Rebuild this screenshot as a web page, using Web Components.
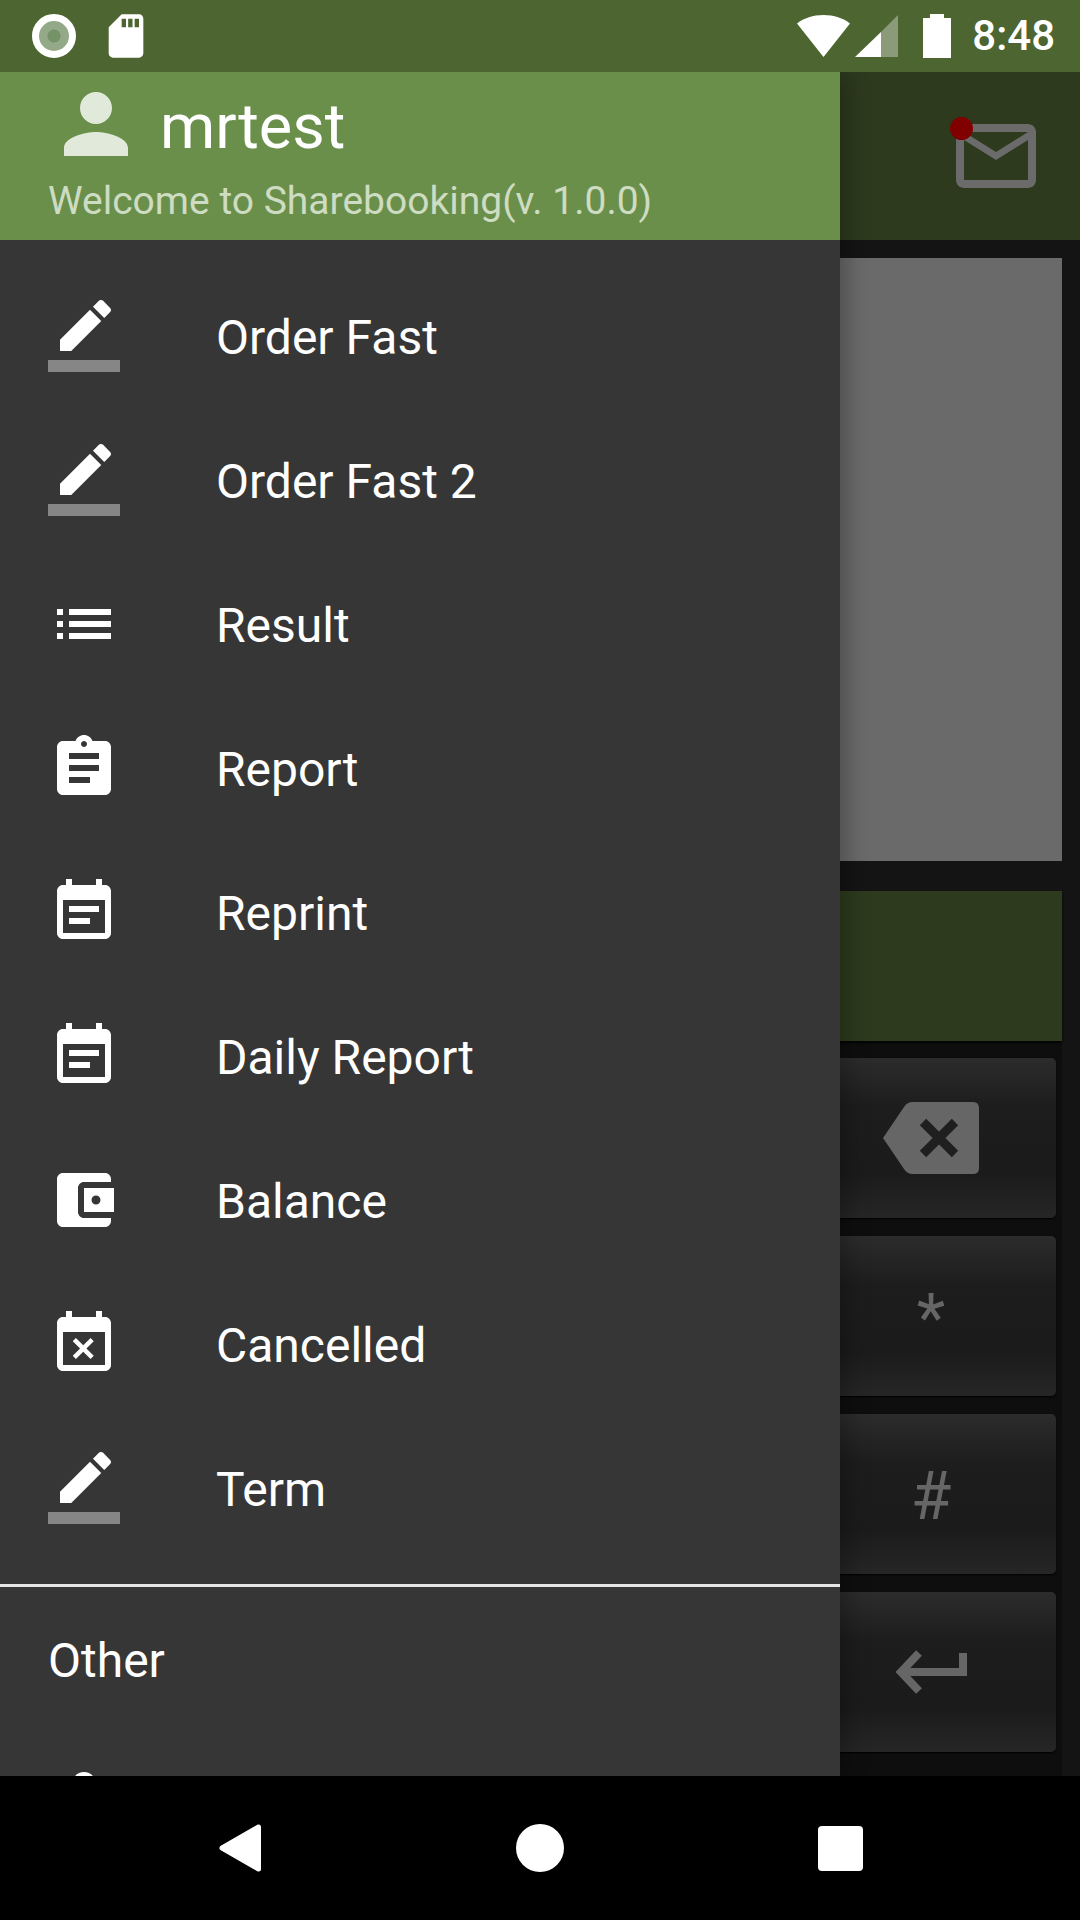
<!DOCTYPE html>
<html>
<head>
<meta charset="utf-8">
<title>Sharebooking</title>
<style>
  html, body { margin: 0; padding: 0; background: #000; }
  body { font-family: Roboto, "Liberation Sans", sans-serif; }
</style>
</head>
<body>
<phone-shell>
  <status-bar slot="status" time="8:48"></status-bar>
  <app-toolbar></app-toolbar>
  <order-panel>
    <dial-key kind="backspace"></dial-key>
    <dial-key>*</dial-key>
    <dial-key>#</dial-key>
    <dial-key kind="enter"></dial-key>
  </order-panel>
  <nav-drawer slot="drawer" user="mrtest" welcome="Welcome to Sharebooking(v. 1.0.0)">
    <drawer-item icon="border">Order Fast</drawer-item>
    <drawer-item icon="border">Order Fast 2</drawer-item>
    <drawer-item icon="list">Result</drawer-item>
    <drawer-item icon="assignment">Report</drawer-item>
    <drawer-item icon="note">Reprint</drawer-item>
    <drawer-item icon="note">Daily Report</drawer-item>
    <drawer-item icon="wallet">Balance</drawer-item>
    <drawer-item icon="busy">Cancelled</drawer-item>
    <drawer-item icon="border">Term</drawer-item>
    <drawer-section slot="other">Other</drawer-section>
    <drawer-item slot="other" icon="person"></drawer-item>
  </nav-drawer>
  <system-nav slot="nav"></system-nav>
</phone-shell>

<script>
const ICONS = {
  border: `<path d="M17.75 7L14 3.25l-10 10V17h3.75l10-10zm2.96-2.96c.39-.39.39-1.02 0-1.41L18.37.29c-.39-.39-1.02-.39-1.41 0L15 2.25 18.75 6l1.96-1.96z"/><path fill-opacity=".4" d="M0 20h24v4H0z"/>`,
  list: `<path d="M3 13h2v-2H3v2zm0 4h2v-2H3v2zm0-8h2V7H3v2zm4 4h14v-2H7v2zm0 4h14v-2H7v2zM7 7v2h14V7H7z"/>`,
  assignment: `<path d="M19 3h-4.18C14.4 1.84 13.3 1 12 1c-1.3 0-2.4.84-2.82 2H5c-1.1 0-2 .9-2 2v14c0 1.1.9 2 2 2h14c1.1 0 2-.9 2-2V5c0-1.1-.9-2-2-2zm-7 0c.55 0 1 .45 1 1s-.45 1-1 1-1-.45-1-1 .45-1 1-1zm2 14H7v-2h7v2zm3-4H7v-2h10v2zm0-4H7V7h10v2z"/>`,
  note: `<path d="M17 10H7v2h10v-2zm2-7h-1V1h-2v2H8V1H6v2H5c-1.11 0-1.99.9-1.99 2L3 19c0 1.1.89 2 2 2h14c1.1 0 2-.9 2-2V5c0-1.1-.9-2-2-2zm0 16H5V8h14v11zm-5-5H7v2h7v-2z"/>`,
  wallet: `<path d="M21 18v1c0 1.1-.9 2-2 2H5c-1.11 0-2-.9-2-2V5c0-1.1.89-2 2-2h14c1.1 0 2 .9 2 2v1h-9c-1.11 0-2 .9-2 2v8c0 1.1.89 2 2 2h9zm-9-2h10V8H12v8zm4-2.5c-.83 0-1.5-.67-1.5-1.5s.67-1.5 1.5-1.5 1.5.67 1.5 1.5-.67 1.5-1.5 1.5z"/>`,
  busy: `<path d="M9.31 17l2.44-2.44L14.19 17l1.06-1.06-2.44-2.44 2.44-2.44L14.19 10l-2.44 2.44L9.31 10l-1.06 1.06 2.44 2.44-2.44 2.44L9.31 17zM19 3h-1V1h-2v2H8V1H6v2H5c-1.11 0-1.99.9-1.99 2L3 19c0 1.1.89 2 2 2h14c1.1 0 2-.9 2-2V5c0-1.1-.9-2-2-2zm0 16H5V8h14v11z"/>`,
  person: `<path d="M12 12c2.21 0 4-1.79 4-4s-1.79-4-4-4-4 1.79-4 4 1.79 4 4 4zm0 2c-2.67 0-8 1.34-8 4v2h16v-2c0-2.66-5.33-4-8-4z"/>`,
  mail: `<path d="M20 4H4c-1.1 0-1.99.9-1.99 2L2 18c0 1.1.9 2 2 2h16c1.1 0 2-.9 2-2V6c0-1.1-.9-2-2-2zm0 14H4V8l8 5 8-5v10zm-8-7L4 6h16l-8 5z"/>`,
  sd: `<path d="M18 2h-8L4.02 8 4 20c0 1.1.9 2 2 2h12c1.1 0 2-.9 2-2V4c0-1.1-.9-2-2-2zm-6 6h-2V4h2v4zm3 0h-2V4h2v4zm3 0h-2V4h2v4z"/>`,
};

function svgIcon(name, size) {
  return `<svg width="${size}" height="${size}" viewBox="0 0 24 24" fill="currentColor">${ICONS[name]}</svg>`;
}

class PhoneShell extends HTMLElement {
  constructor() {
    super();
    this.attachShadow({ mode: "open" }).appendChild(shellTemplate.content.cloneNode(true));
  }
}

class StatusBar extends HTMLElement {
  constructor() {
    super();
    this.attachShadow({ mode: "open" }).appendChild(statusTemplate.content.cloneNode(true));
    this.shadowRoot.querySelector(".sd").innerHTML = svgIcon("sd", 52);
    this.shadowRoot.querySelector(".time").textContent = this.getAttribute("time");
  }
}

class AppToolbar extends HTMLElement {
  constructor() {
    super();
    this.attachShadow({ mode: "open" }).appendChild(toolbarTemplate.content.cloneNode(true));
    this.shadowRoot.querySelector(".mail").insertAdjacentHTML("afterbegin", svgIcon("mail", 96));
  }
}

class OrderPanel extends HTMLElement {
  constructor() {
    super();
    this.attachShadow({ mode: "open" }).appendChild(panelTemplate.content.cloneNode(true));
  }
}

class DialKey extends HTMLElement {
  constructor() {
    super();
    this.attachShadow({ mode: "open" }).appendChild(keyTemplate.content.cloneNode(true));
    const kind = this.getAttribute("kind");
    if (kind) this.shadowRoot.querySelector(".glyph").innerHTML = KEY_GLYPHS[kind];
  }
}

class NavDrawer extends HTMLElement {
  constructor() {
    super();
    this.attachShadow({ mode: "open" }).appendChild(drawerTemplate.content.cloneNode(true));
    this.shadowRoot.querySelector(".avatar").innerHTML = svgIcon("person", 96);
    this.shadowRoot.querySelector(".user").textContent = this.getAttribute("user");
    this.shadowRoot.querySelector(".welcome").textContent = this.getAttribute("welcome");
  }
}

class DrawerItem extends HTMLElement {
  constructor() {
    super();
    this.attachShadow({ mode: "open" }).appendChild(itemTemplate.content.cloneNode(true));
    this.shadowRoot.querySelector(".icon").innerHTML = svgIcon(this.getAttribute("icon"), 72);
  }
}

class DrawerSection extends HTMLElement {
  constructor() {
    super();
    this.attachShadow({ mode: "open" }).appendChild(sectionTemplate.content.cloneNode(true));
  }
}

class SystemNav extends HTMLElement {
  constructor() {
    super();
    this.attachShadow({ mode: "open" }).appendChild(navTemplate.content.cloneNode(true));
  }
}

const KEY_GLYPHS = {
  backspace: `<svg width="96" height="72" viewBox="0 0 96 72">
      <path fill="#666" d="M0 36L21 5Q24 0 30 0H90Q96 0 96 6V66Q96 72 90 72H30Q24 72 21 67z"/>
      <path stroke="#1f1f1f" stroke-width="9" fill="none" d="M40 20L72 52M72 20L40 52"/>
    </svg>`,
  enter: `<svg width="72" height="44" viewBox="0 0 72 44">
      <path stroke="#666" stroke-width="8" fill="none" d="M68 3V22H6"/>
      <path stroke="#666" stroke-width="8" fill="none" d="M24 3L6 22L24 41"/>
    </svg>`,
};

const shellTemplate = html`
  <div class="frame">
    <slot name="status"></slot>
    <div class="main">
      <slot></slot>
      <slot name="drawer"></slot>
    </div>
    <slot name="nav"></slot>
  </div>
  <style>
    :host {
      display: block;
      width: 1080px;
      height: 1920px;
      overflow: hidden;
    }

    .frame {
      display: flex;
      flex-direction: column;
      height: 100%;
    }

    .main {
      position: relative;
      flex: 1;
      display: flex;
      flex-direction: column;
      background: #141414;
      overflow: hidden;
    }
  </style>
`;

const statusTemplate = html`
  <div class="left">
    <span class="ring"></span>
    <span class="sd"></span>
  </div>
  <div class="right">
    <svg class="wifi" width="53" height="42" viewBox="0 0 53 42">
      <path fill="#fff" d="M26.5 42L0 8.5C7 3 16 0 26.5 0S46 3 53 8.5z"/>
    </svg>
    <svg class="signal" width="43" height="42" viewBox="0 0 43 42">
      <path fill="#fff" fill-opacity=".35" d="M43 0V42H26V17z"/>
      <path fill="#fff" d="M26 17V42H0z"/>
    </svg>
    <svg class="battery" width="28" height="44" viewBox="0 0 28 44">
      <path fill="#fff" d="M7 0H21V4H28V44H0V4H7z"/>
    </svg>
    <span class="time"></span>
  </div>
  <style>
    :host {
      display: flex;
      flex: none;
      align-items: center;
      justify-content: space-between;
      height: 72px;
      background: #4d6531;
      color: #fff;
      font-family: Roboto, "Liberation Sans", sans-serif;
    }

    .left, .right {
      display: flex;
      align-items: center;
    }

    .left {
      padding-left: 32px;
    }

    .ring {
      box-sizing: border-box;
      width: 44px;
      height: 44px;
      border-radius: 50%;
      border: 7px solid #fff;
      background: radial-gradient(circle, #769368 0 6px, #93a988 7px);
    }

    .sd {
      display: block;
      height: 52px;
      margin-left: 24px;
      color: #fff;
    }

    .right {
      padding-right: 25px;
    }

    .signal {
      margin-left: 5px;
    }

    .battery {
      margin-left: 25px;
    }

    .time {
      margin-left: 21px;
      font-size: 42px;
      font-weight: 500;
      line-height: 72px;
    }
  </style>
`;

const toolbarTemplate = html`
  <div class="mail"><span class="dot"></span></div>
  <style>
    :host {
      display: flex;
      flex: none;
      align-items: center;
      justify-content: flex-end;
      height: 168px;
      padding-right: 36px;
      background: #2d3a1d;
    }

    .mail {
      position: relative;
      height: 96px;
      color: #6b6b6b;
    }

    .dot {
      position: absolute;
      left: 2px;
      top: 9px;
      width: 23px;
      height: 23px;
      border-radius: 50%;
      background: #800000;
    }
  </style>
`;

const panelTemplate = html`
  <div class="photo"></div>
  <div class="amount"></div>
  <div class="keys"><slot></slot></div>
  <style>
    :host {
      display: flex;
      flex: 1;
      flex-direction: column;
      padding: 18px 18px 0;
    }

    .photo {
      height: 603px;
      background: #6a6a6a;
    }

    .amount {
      position: relative;
      height: 150px;
      margin-top: 30px;
      background: #2d3a1d;
      box-shadow: 0 2px 2px #050505;
    }

    .keys {
      flex: 1;
      display: flex;
      flex-direction: column;
      align-items: flex-end;
      gap: 18px;
      padding: 17px 6px 0 0;
      background: #0e0e0e;
    }
  </style>
`;

const keyTemplate = html`
  <div class="glyph"><slot></slot></div>
  <style>
    :host {
      display: flex;
      flex: none;
      align-items: center;
      justify-content: center;
      width: 250px;
      height: 160px;
      border-radius: 5px;
      background: linear-gradient(#2c2c2c, #1d1d1d 30%, #1b1b1b 72%, #262626);
      box-shadow: 0 1px 2px #000;
      color: #666;
      font-family: Roboto, "Liberation Sans", sans-serif;
      font-size: 66px;
    }

    :host(:not([kind])) .glyph {
      padding-top: 6px;
    }

    .glyph {
      display: flex;
      align-items: center;
      justify-content: center;
      line-height: 1;
    }

    svg {
      display: block;
    }
  </style>
`;

const drawerTemplate = html`
  <header>
    <div class="who">
      <span class="avatar"></span>
      <span class="user"></span>
    </div>
    <div class="welcome"></div>
  </header>
  <div class="menu"><slot></slot></div>
  <hr>
  <slot name="other"></slot>
  <style>
    :host {
      position: absolute;
      top: 0;
      left: 0;
      bottom: 0;
      width: 840px;
      display: block;
      background: #363636;
      color: #fff;
      font-family: Roboto, "Liberation Sans", sans-serif;
      box-shadow: 6px 0 22px rgba(0, 0, 0, .28);
      clip-path: inset(0 -40px 0 0);
    }

    header {
      box-sizing: border-box;
      height: 168px;
      padding: 4px 0 0 48px;
      background: #6a8f4a;
    }

    .who {
      display: flex;
      align-items: center;
      height: 96px;
    }

    .avatar {
      display: block;
      height: 96px;
      color: rgba(255, 255, 255, .8);
    }

    .user {
      margin-left: 16px;
      padding-top: 5px;
      font-size: 63px;
    }

    .welcome {
      margin-top: 6px;
      font-size: 39px;
      line-height: 46px;
      color: #cddcc2;
    }

    .menu {
      padding-top: 24px;
    }

    hr {
      height: 3px;
      margin: 24px 0 0;
      border: 0;
      background: #e6e6e6;
    }
  </style>
`;

const itemTemplate = html`
  <span class="icon"></span>
  <span class="label"><slot></slot></span>
  <style>
    :host {
      display: flex;
      align-items: center;
      height: 144px;
      padding-left: 48px;
      font-size: 48px;
      color: #fff;
    }

    .icon {
      display: block;
      height: 72px;
    }

    .label {
      margin-left: 96px;
      padding-top: 2px;
    }
  </style>
`;

const sectionTemplate = html`
  <slot></slot>
  <style>
    :host {
      display: flex;
      box-sizing: border-box;
      align-items: center;
      height: 137px;
      padding: 10px 0 0 48px;
      font-size: 48px;
      color: #fff;
    }
  </style>
`;

const navTemplate = html`
  <svg width="42" height="48" viewBox="0 0 42 48">
    <path fill="#fff" stroke="#fff" stroke-width="5" stroke-linejoin="round" d="M3 24L39.5 3V45z"/>
  </svg>
  <span class="home"></span>
  <span class="recent"></span>
  <style>
    :host {
      display: grid;
      flex: none;
      grid-template-columns: repeat(3, 300px);
      justify-content: center;
      justify-items: center;
      align-items: center;
      height: 144px;
      background: #000;
    }

    .home {
      width: 48px;
      height: 48px;
      border-radius: 50%;
      background: #fff;
    }

    .recent {
      width: 45px;
      height: 45px;
      border-radius: 4px;
      background: #fff;
    }
  </style>
`;

customElements.define("phone-shell", PhoneShell);
customElements.define("status-bar", StatusBar);
customElements.define("app-toolbar", AppToolbar);
customElements.define("order-panel", OrderPanel);
customElements.define("dial-key", DialKey);
customElements.define("nav-drawer", NavDrawer);
customElements.define("drawer-item", DrawerItem);
customElements.define("drawer-section", DrawerSection);
customElements.define("system-nav", SystemNav);

/**
 * html is a template tag used to construct a <template>.
 * @param {TemplateStringsArray} htmlString
 */
function html(htmlString) {
  const template = document.createElement("template");
  template.innerHTML = String.raw(htmlString);
  return template;
}
</script>
</body>
</html>
